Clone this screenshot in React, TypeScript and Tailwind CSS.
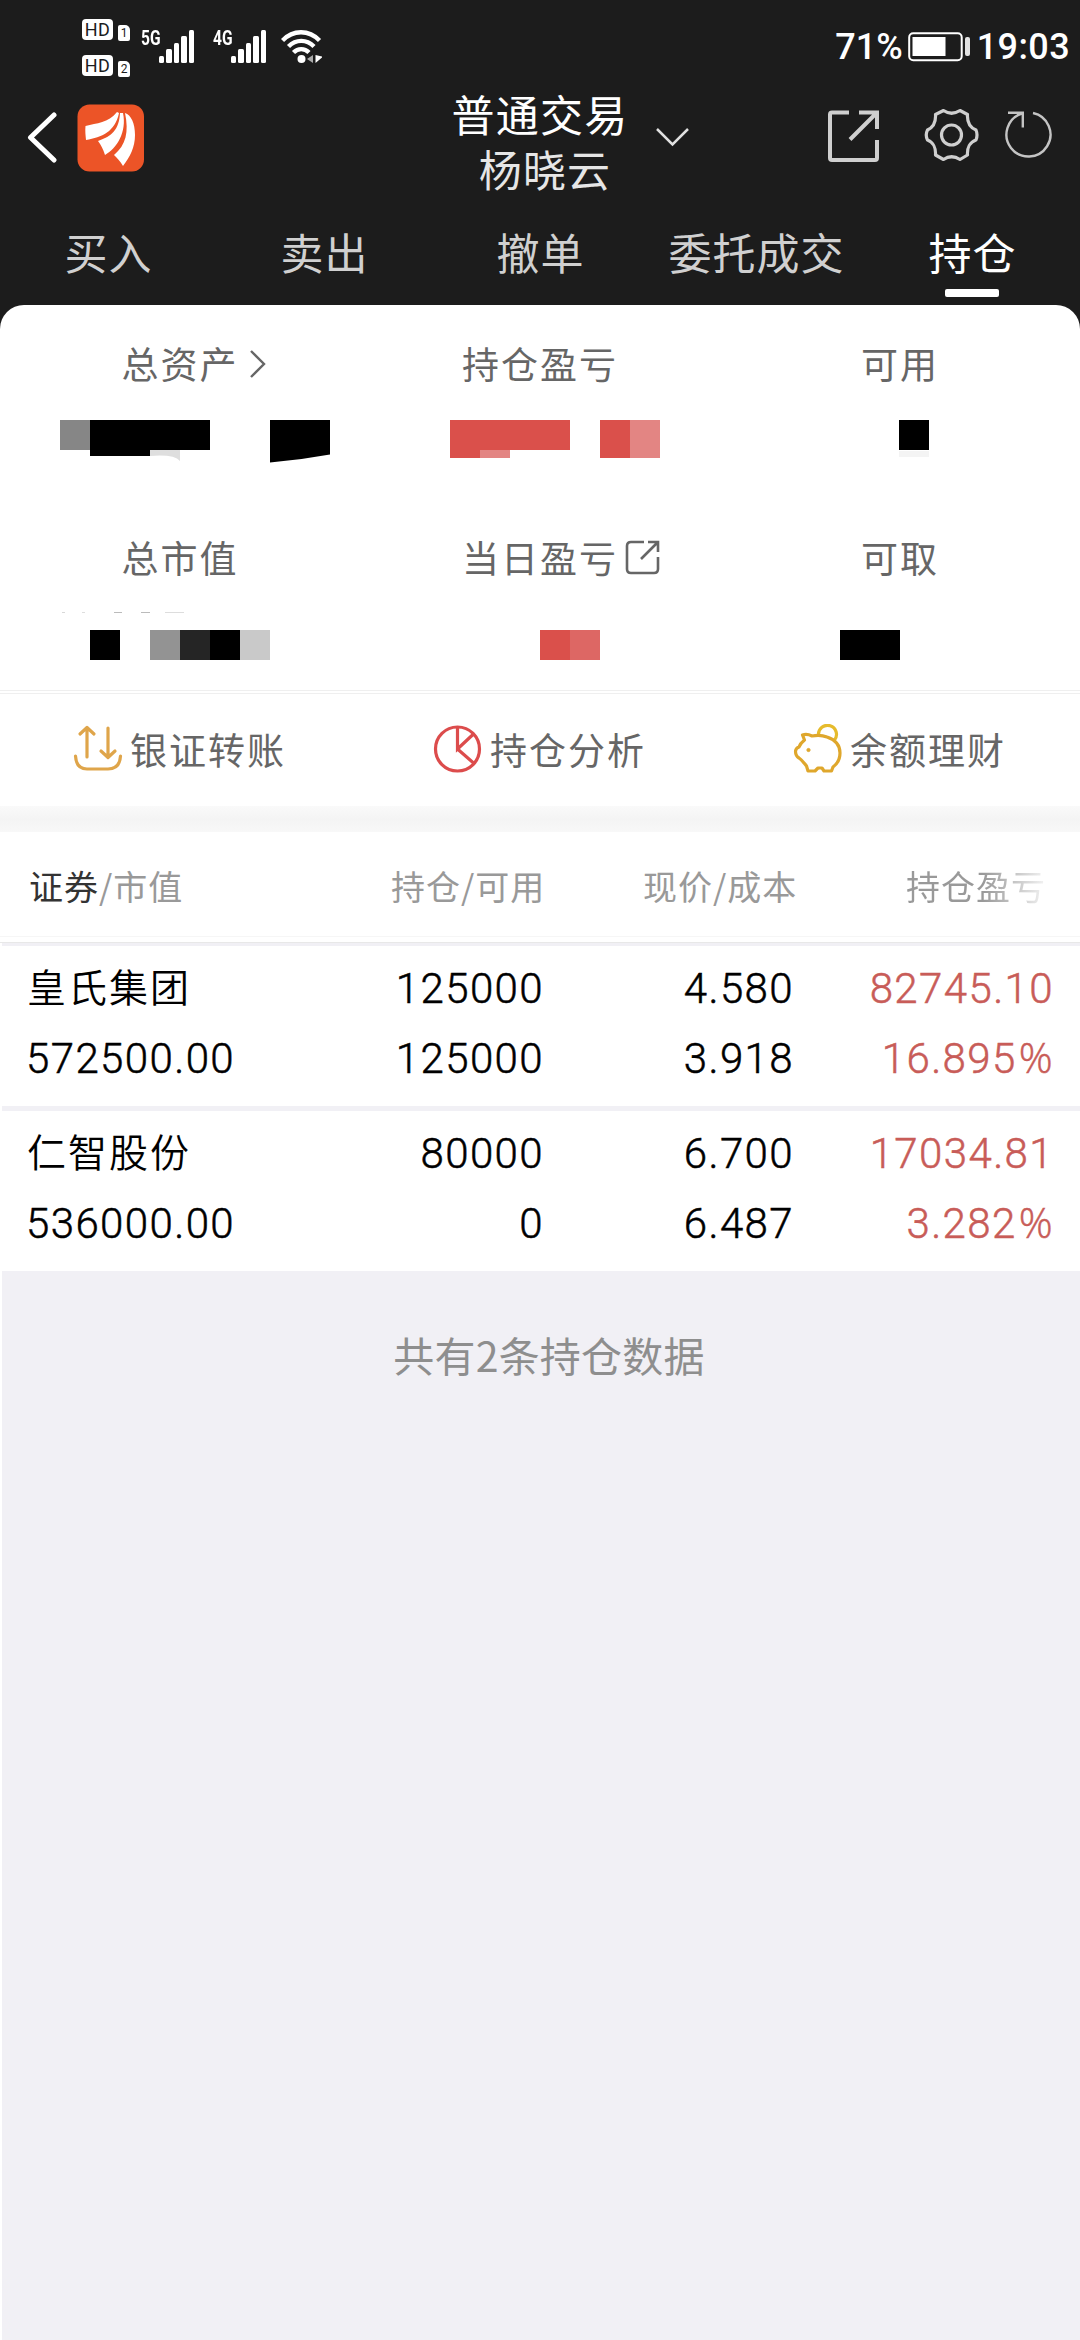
import type { ReactNode } from 'react';

const tabs = ['买入', '卖出', '撤单', '委托成交', '持仓'];

interface Holding {
  name: string;
  marketValue: string;
  amount: string;
  available: string;
  price: string;
  cost: string;
  profit: string;
  percent: string;
}

const holdings: Holding[] = [
  {
    name: '皇氏集团',
    marketValue: '572500.00',
    amount: '125000',
    available: '125000',
    price: '4.580',
    cost: '3.918',
    profit: '82745.10',
    percent: '16.895',
  },
  {
    name: '仁智股份',
    marketValue: '536000.00',
    amount: '80000',
    available: '0',
    price: '6.700',
    cost: '6.487',
    profit: '17034.81',
    percent: '3.282',
  },
];

// [x, y, width, height, color], relative to the value row of a column
type Block = [number, number, number, number, string];

function HdBadge({ sim }: { sim: string }) {
  return (
    <div className="flex items-end">
      <div className="flex h-[21px] w-[31px] items-center justify-center rounded-[4px] bg-white font-['Roboto'] text-[18px] leading-none tracking-[0.5px] text-[#1c1c1c]">
        HD
      </div>
      <div className="relative top-[1px] ml-[5px] flex h-[16px] w-[12px] items-center justify-center rounded-[2px] rounded-tr-[5px] bg-white font-['Roboto'] text-[12px] leading-none text-[#1c1c1c]">
        {sim}
      </div>
    </div>
  );
}

function Signal({ label }: { label: string }) {
  return (
    <div className="flex">
      <span className="h-[33px] w-[18px] origin-left scale-x-[0.74] font-['Roboto'] text-[21px] leading-[16px] font-bold text-white">
        {label}
      </span>
      <svg width="35" height="33" viewBox="0 0 35 33" fill="#fff">
        <rect x="0" y="26" width="5" height="7" rx="1.5" />
        <rect x="7" y="19" width="6" height="14" rx="1.5" />
        <rect x="15" y="13" width="5" height="20" rx="1.5" />
        <rect x="22" y="6" width="6" height="27" rx="1.5" />
        <rect x="30" y="0" width="5" height="33" rx="1.5" />
      </svg>
    </div>
  );
}

function WifiIcon() {
  return (
    <svg width="42" height="34" viewBox="0 0 42 34" fill="none" stroke="#fff" strokeWidth="4.4">
      <path d="M1.5 10.5C12-0.5 28-0.5 38.5 10.5" />
      <path d="M7.5 16.5C15 9 25.5 9 33 16.5" />
      <path d="M12.5 22.5C17 18 23.5 18 28 22.5" />
      <circle cx="20.5" cy="29" r="4" fill="#fff" stroke="none" />
      <path d="M32 25V33L26 29Z" fill="#aaa" stroke="none" />
      <path d="M34.5 25V33L41 27.5V26.5Z" fill="#fff" stroke="none" />
    </svg>
  );
}

function BatteryIcon() {
  return (
    <svg width="62" height="30" viewBox="0 0 62 30" fill="none">
      <rect x="1.2" y="1.2" width="52.5" height="27" rx="4" stroke="#fff" strokeWidth="2" />
      <rect x="4.5" y="5" width="33" height="19" fill="#fff" />
      <rect x="57" y="5" width="5" height="19" rx="2" fill="#e2e2e2" />
    </svg>
  );
}

function StatusBar() {
  return (
    <div className="flex h-[85px] items-start pt-[19px] pr-[10px] pl-[82px]">
      <div className="flex flex-col gap-[15px]">
        <HdBadge sim="1" />
        <HdBadge sim="2" />
      </div>
      <div className="mt-[11px] ml-[11px] flex">
        <Signal label="5G" />
        <div className="w-[19px]" />
        <Signal label="4G" />
        <div className="w-[15px]" />
        <WifiIcon />
      </div>
      <div className="mt-[8px] ml-auto flex items-center font-['Roboto'] text-[36px] leading-[40px] font-medium text-white">
        <span>71%</span>
        <span className="mr-[7px] ml-[5px]">
          <BatteryIcon />
        </span>
        <span className="tracking-[0.4px]">19:03</span>
      </div>
    </div>
  );
}

function Logo() {
  return (
    <svg width="68" height="68" viewBox="0 0 68 68">
      <rect x="0.5" y="0.5" width="66.5" height="67" rx="12" fill="#ec5427" />
      <g fill="#fff">
        <path d="M40 8C31 19 20 19 8.5 22C8 27 8.5 31 9 36C25 33 38 28 42 9Z" />
        <path d="M43 9H46C50 28 40 44 28 51C26 45 24 41 21 37C35 32 42 26 43 9Z" />
        <path d="M48 9C54 11 58 19 58 31C58 43 53 53 46 62C43 57 40 54 37 51C49 41 52 28 48 9Z" />
      </g>
    </svg>
  );
}

function TitleBar() {
  return (
    <div className="flex h-[115px] items-start">
      <svg className="mt-[27px] ml-[26px]" width="32" height="52" viewBox="0 0 32 52" fill="none">
        <path d="M28 3L4.5 25.5L28 48" stroke="#fff" strokeWidth="5" strokeLinecap="round" strokeLinejoin="round" />
      </svg>
      <div className="mt-[19px] ml-[19px]">
        <Logo />
      </div>
      <div className="mt-[1px] ml-[308px] w-[184px] text-center text-[43px] leading-[55px] tracking-[1.2px] text-white">
        <div className="-ml-[10px]">普通交易</div>
        <div className="text-[#e6e6e6]">杨晓云</div>
      </div>
      <svg className="mt-[41px] ml-[18px]" width="36" height="22" viewBox="0 0 36 22" fill="none" stroke="#e0e0e0" strokeWidth="2.5">
        <path d="M2 3L17.5 18.5L33 3" />
      </svg>
      <svg className="mt-[24px] ml-[136px]" width="54" height="54" viewBox="0 0 54 54" fill="none" stroke="#cfcfcf" strokeWidth="4">
        <path d="M22 3.5H5Q3 3.5 3 5.5V49Q3 51 5 51H48Q50 51 50 49V31" />
        <path d="M32 3.5H50V20M50 3.5L23 30.5" />
      </svg>
      <svg className="mt-[23px] ml-[43px]" width="56" height="54" viewBox="0 0 56 54" fill="none" stroke="#cfcfcf" strokeWidth="3.2">
        <path
          d="M19.5 2.5Q27.5 8 36 2.5L43.5 6.5C43 14 46 19.5 52 22Q54 27 52 32C46 34 43 40 43.5 47L36 51.5Q27.5 46 19.5 51.5L11.5 47C12 40 9 34 3.5 32Q1 27 3.5 22C9 19.5 12 14 11.5 6.5Z"
          strokeLinejoin="round"
        />
        <circle cx="27.5" cy="27" r="10" />
      </svg>
      <svg className="mt-[25px] ml-[24px]" width="52" height="52" viewBox="0 0 52 52" fill="none" stroke="#c4c4c4" strokeWidth="2.4">
        <path d="M29 3A22 22 0 1 1 18 3.5" />
        <path d="M4 2.8H18.8V17.5" />
      </svg>
    </div>
  );
}

function Tabs() {
  return (
    <div className="grid h-[105px] grid-cols-5 text-[43px] leading-[60px] tracking-[1px] text-[#d0d0d0]">
      {tabs.map(tab => (
        <div key={tab} className="flex flex-col items-center pt-[21px]">
          <span className={tab === '持仓' ? 'pl-[1px] text-white' : 'pl-[1px]'}>{tab}</span>
          {tab === '持仓' && <div className="mt-[8px] h-[8px] w-[54px] rounded-[2px] bg-white" />}
        </div>
      ))}
    </div>
  );
}

interface AssetCellProps {
  label: string;
  icon?: ReactNode;
  blocks: Block[];
  children?: ReactNode;
}

function AssetCell({ label, icon, blocks, children }: AssetCellProps) {
  return (
    <div className="flex flex-col items-center">
      <div className="relative text-[37px] leading-[54px] tracking-[2px] text-[#666]">
        {label}
        {icon}
      </div>
      <svg className="mt-[19px]" width="360" height="60" viewBox="0 0 360 60">
        {blocks.map(([x, y, w, h, fill]) => (
          <rect key={`${x}-${y}`} x={x} y={y} width={w} height={h} fill={fill} />
        ))}
        {children}
      </svg>
    </div>
  );
}

function Assets() {
  return (
    <div className="grid h-[385px] grid-cols-3 grid-rows-[194px_191px] pt-[31px]">
      <AssetCell
        label="总资产"
        icon={
          <svg className="absolute top-[13px] left-[127px]" width="18" height="30" viewBox="0 0 18 30" fill="none" stroke="#666" strokeWidth="2.4">
            <path d="M2 2L15 15L2 28" />
          </svg>
        }
        blocks={[
          [60, 11, 30, 30, '#868686'],
          [90, 11, 120, 30, '#000'],
          [90, 40, 60, 7, '#000'],
        ]}
      >
        <path d="M150 41H180V52Q174 45 150 47Z" fill="#dedede" />
        <path d="M270 11H330V45.5Q300 51 270 53.5Z" />
      </AssetCell>
      <AssetCell
        label="持仓盈亏"
        blocks={[
          [90, 11, 120, 30, '#da504b'],
          [90, 40, 30, 9, '#da504b'],
          [120, 41, 30, 8, '#e38583'],
          [240, 11, 30, 38, '#da504b'],
          [270, 11, 30, 38, '#e38583'],
        ]}
      />
      <AssetCell label="可用" blocks={[[179, 11, 30, 30, '#000'], [179, 42, 30, 6, '#f4f4f4']]} />
      <AssetCell
        label="总市值"
        blocks={[
          [62, 9, 3, 1, '#d8d8d8'],
          [82, 9, 3, 1, '#dedede'],
          [114, 9, 8, 1, '#bbb'],
          [141, 9, 9, 1, '#bbb'],
          [165, 9, 19, 1, '#ddd'],
          [90, 27, 30, 30, '#000'],
          [150, 27, 30, 30, '#939393'],
          [180, 27, 30, 30, '#252525'],
          [210, 27, 30, 30, '#000'],
          [240, 27, 30, 30, '#c9c9c9'],
        ]}
      />
      <AssetCell
        label="当日盈亏"
        icon={
          <svg className="absolute top-[10px] left-[162px]" width="36" height="36" viewBox="0 0 36 36" fill="none" stroke="#666" strokeWidth="2.6">
            <path d="M20 2H7Q3 2 3 6V29Q3 33 7 33H30Q34 33 34 29V17" />
            <path d="M24 2H34V12M34 2L17 19" />
          </svg>
        }
        blocks={[[180, 27, 30, 30, '#da504b'], [210, 27, 30, 30, '#dd6764']]}
      />
      <AssetCell label="可取" blocks={[[120, 27, 60, 30, '#000']]} />
    </div>
  );
}

function Action({ label, children }: { label: string; children: ReactNode }) {
  return (
    <div className="flex items-center pb-[2px] pl-[73px] text-[37px] leading-[54px] tracking-[2px] text-[#666]">
      <svg width="50" height="50" viewBox="0 0 50 50" fill="none" strokeWidth="3.2">
        {children}
      </svg>
      <span className="ml-[7px]">{label}</span>
    </div>
  );
}

function Actions() {
  return (
    <div className="grid h-[112px] grid-cols-3">
      <Action label="银证转账">
        <g stroke="#dfa54a" strokeLinecap="round" strokeLinejoin="round">
          <path d="M14 33V4M7 10L14 3.5L21 10M35 4V33M28 27L35 33.5L42 27" />
          <path d="M2.5 32C3 41 7 45 14 45H35C43 45 47 41 47.5 32" />
        </g>
      </Action>
      <Action label="持仓分析">
        <g stroke="#dc4c4c">
          <circle cx="24.5" cy="25" r="22" />
          <path d="M24.5 3V25L40 10.5M24.5 25L40.5 39" />
        </g>
      </Action>
      <Action label="余额理财">
        <g stroke="#dfa72c" strokeLinejoin="round">
          <path d="M25.5 11A9 9 0 1 1 41.5 16" stroke="#e6bb2c" />
          <path d="M9.5 11C14 9.5 17 11 19 12C24 11 29 11 34 13C43 16 47 22 47 29C47 35 44 40 40 43L38.5 47H31L29 44H25L22 47H15L13.5 42C11 39 9 36 6 34Q2.5 32 2.5 27Q3 24 6 23C7 20 9 18 11.5 16Z" />
          <circle cx="15.5" cy="26" r="1.6" fill="#dfa72c" strokeWidth="1" />
        </g>
      </Action>
    </div>
  );
}

function TableHead() {
  return (
    <div className="flex h-[104px] items-start pt-[29px] pl-[29px] text-[34px] leading-[50px] tracking-[1px] text-[#999]">
      <div className="w-[362px]">
        <span className="text-[#333]">证券</span>/市值
      </div>
      <div className="w-[252px]">持仓/可用</div>
      <div className="w-[263px]">现价/成本</div>
      <div className="bg-gradient-to-r from-[#999] from-55% to-[#f4f4f4] to-100% bg-clip-text text-transparent">持仓盈亏</div>
    </div>
  );
}

function HoldingRow({ item }: { item: Holding }) {
  return (
    <div className="ml-[2px] grid h-[160px] shrink-0 grid-cols-[340px_202px_250px_260px] grid-rows-[70px_70px] bg-white pt-[8px] text-right font-['Roboto','Noto_Sans_CJK_SC',sans-serif] text-[42px] leading-[70px] font-light tracking-[1.4px] text-black [-webkit-text-stroke:0.5px]">
      <div className="pl-[25px] text-left text-[39px] font-[350] tracking-[2px] [-webkit-text-stroke:0]">{item.name}</div>
      <div>{item.amount}</div>
      <div>{item.price}</div>
      <div className="text-[#c85c58]">{item.profit}</div>
      <div className="pl-[24px] text-left">{item.marketValue}</div>
      <div>{item.available}</div>
      <div>{item.cost}</div>
      <div className="text-[#c85c58]">
        {item.percent}
        <span className="ml-[2px] font-['Open_Sans'] leading-none">%</span>
      </div>
    </div>
  );
}

export default function App() {
  return (
    <div className="flex h-[2340px] w-[1080px] flex-col overflow-hidden bg-white font-['Noto_Sans_CJK_SC',sans-serif]">
      <header className="h-[305px] shrink-0 bg-[#1c1c1c]">
        <StatusBar />
        <TitleBar />
        <Tabs />
      </header>
      <section className="shrink-0 bg-[#1c1c1c]">
        <div className="rounded-t-[24px] bg-white">
          <Assets />
        </div>
      </section>
      <div className="h-[4px] shrink-0 border-y border-[#efefef]" />
      <Actions />
      <div className="h-[26px] shrink-0 bg-gradient-to-b from-[#fafafa] via-[#f4f4f4] to-[#f8f8f8]" />
      <TableHead />
      <div className="h-[7px] shrink-0 border-t border-b border-t-[#f6f6f6] border-b-[#e8e8e8]" />
      <div className="ml-[2px] h-[3px] shrink-0 bg-[#f1f0f5]" />
      <HoldingRow item={holdings[0]} />
      <div className="ml-[2px] h-[5px] shrink-0 bg-[#f1f0f5]" />
      <HoldingRow item={holdings[1]} />
      <div className="ml-[2px] grow bg-[#f1f0f5] pt-[53px] pl-[16px] text-center text-[41px] leading-[60px] tracking-[0.2px] text-[#8e8e8e]">
        共有2条持仓数据
      </div>
    </div>
  );
}
